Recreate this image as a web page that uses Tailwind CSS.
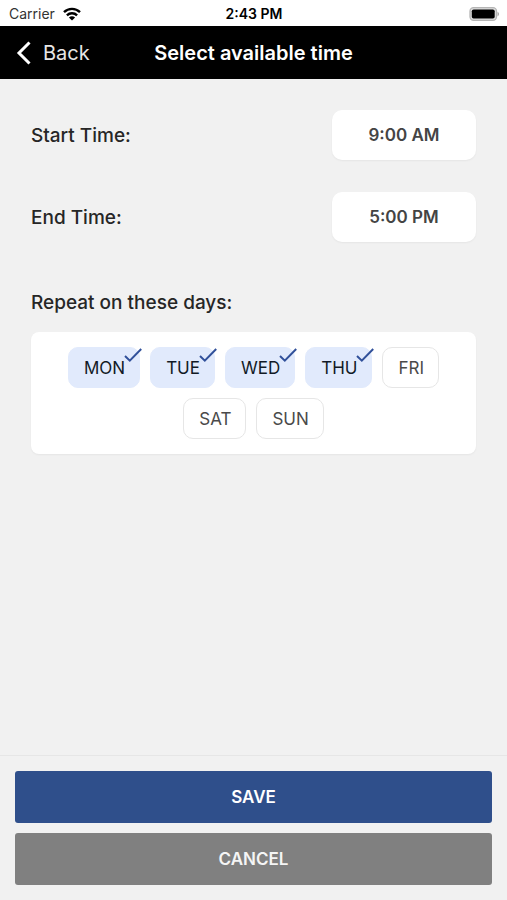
<!DOCTYPE html>
<html lang="en">
<head>
<meta charset="utf-8">
<meta name="viewport" content="width=device-width, initial-scale=1">
<title>Select available time</title>
<script src="https://cdn.jsdelivr.net/npm/@tailwindcss/browser@4"></script>
</head>
<body class="flex min-h-screen flex-col bg-[#f1f1f1] font-[Inter,sans-serif] text-[#262626]">
  <div class="grid h-[26px] grid-cols-[1fr_auto_1fr] items-center bg-white pt-px pr-2 pl-[9px] text-[14px] leading-5 text-black">
    <div class="flex items-center gap-2 text-[#333]">
      <span>Carrier</span>
      <svg class="h-[14px] w-[18px]" viewBox="0 0 18 14" fill="none" stroke="#000" stroke-width="2.4" aria-hidden="true">
        <path d="M1 5.2C5.5 .8 12.500 .8 17 5.200"/>
        <path d="M3.900 8.300c2.900-2.800 7.300-2.800 10.200 0"/>
        <path d="M9 13.600 5.900 10.500c1.700-1.600 4.500-1.600 6.200 0z" fill="#000" stroke="none"/>
      </svg>
    </div>
    <span class="font-semibold">2:43 PM</span>
    <svg class="h-[14px] w-[30px] justify-self-end" viewBox="0 0 30 14" aria-hidden="true">
      <rect x="1" y=".7" width="26.500" height="12.600" rx="3.500" fill="#ddd" stroke="#b5b5b5" stroke-width="1.300"/>
      <rect x="2.800" y="2.400" width="22.900" height="9.200" rx="1.800" fill="#000"/>
      <path d="M28.500 4.700c2 .8 2 3.800 0 4.600z" fill="#aaa"/>
    </svg>
  </div>

  <header class="grid h-[53px] grid-cols-[1fr_auto_1fr] items-center bg-black px-4 text-[20px] leading-6 text-white">
    <button type="button" class="flex items-center gap-[11px] justify-self-start text-[#e6e6e6]">
      <svg class="h-6 w-4" viewBox="0 0 16 24" fill="none" stroke="#fff" stroke-width="3" aria-hidden="true"><path d="M13.500 1.500 3 12 13.500 22.500"/></svg>
      Back
    </button>
    <h1 class="font-semibold">Select available time</h1>
  </header>

  <main class="flex-1 px-[31px] pt-[31px]">
    <div class="flex items-center justify-between">
      <label for="start" class="pt-0.5 text-[19px] leading-6 font-medium">Start Time:</label>
      <button id="start" type="button" class="h-[50px] w-36 rounded-[10px] bg-white pt-0.5 text-[17px] font-semibold text-[#444] shadow-[0_1px_2px_rgba(0,0,0,0.05)]">9:00 AM</button>
    </div>
    <div class="mt-8 flex items-center justify-between">
      <label for="end" class="pt-0.5 text-[19px] leading-6 font-medium">End Time:</label>
      <button id="end" type="button" class="h-[50px] w-36 rounded-[10px] bg-white pt-0.5 text-[17px] font-semibold text-[#444] shadow-[0_1px_2px_rgba(0,0,0,0.05)]">5:00 PM</button>
    </div>

    <fieldset class="mt-12">
      <legend class="pt-px text-[19px] leading-6 font-medium">Repeat on these days:</legend>
      <div class="mt-[17px] flex flex-wrap justify-center gap-[10px] rounded-lg bg-white px-5 py-[15px] text-[17px] leading-6 text-[#4a4a4a] shadow-[0_1px_2px_rgba(0,0,0,0.05)]">
        <label class="group relative flex h-[41px] items-center rounded-[10px] border border-[#e6e6e6] pr-[14px] pl-[15px] has-checked:border-[#e1eafc] has-checked:bg-[#e1eafc] has-checked:text-[#121a26]">
          <input type="checkbox" class="sr-only" checked>MON
          <svg class="absolute -top-px -right-[3px] hidden h-4 w-[18px] group-has-checked:block" viewBox="0 0 18 16" fill="none" stroke="#30509a" stroke-width="2" aria-hidden="true"><path d="M1 9l4.800 4.600L17.200 2"/></svg>
        </label>
        <label class="group relative flex h-[41px] items-center rounded-[10px] border border-[#e6e6e6] pr-[14px] pl-[15px] has-checked:border-[#e1eafc] has-checked:bg-[#e1eafc] has-checked:text-[#121a26]">
          <input type="checkbox" class="sr-only" checked>TUE
          <svg class="absolute -top-px -right-[3px] hidden h-4 w-[18px] group-has-checked:block" viewBox="0 0 18 16" fill="none" stroke="#30509a" stroke-width="2" aria-hidden="true"><path d="M1 9l4.800 4.600L17.200 2"/></svg>
        </label>
        <label class="group relative flex h-[41px] items-center rounded-[10px] border border-[#e6e6e6] pr-[14px] pl-[15px] has-checked:border-[#e1eafc] has-checked:bg-[#e1eafc] has-checked:text-[#121a26]">
          <input type="checkbox" class="sr-only" checked>WED
          <svg class="absolute -top-px -right-[3px] hidden h-4 w-[18px] group-has-checked:block" viewBox="0 0 18 16" fill="none" stroke="#30509a" stroke-width="2" aria-hidden="true"><path d="M1 9l4.800 4.600L17.200 2"/></svg>
        </label>
        <label class="group relative flex h-[41px] items-center rounded-[10px] border border-[#e6e6e6] pr-[14px] pl-[15px] has-checked:border-[#e1eafc] has-checked:bg-[#e1eafc] has-checked:text-[#121a26]">
          <input type="checkbox" class="sr-only" checked>THU
          <svg class="absolute -top-px -right-[3px] hidden h-4 w-[18px] group-has-checked:block" viewBox="0 0 18 16" fill="none" stroke="#30509a" stroke-width="2" aria-hidden="true"><path d="M1 9l4.800 4.600L17.200 2"/></svg>
        </label>
        <label class="group relative flex h-[41px] items-center rounded-[10px] border border-[#e6e6e6] pr-[14px] pl-[15px] has-checked:border-[#e1eafc] has-checked:bg-[#e1eafc] has-checked:text-[#121a26]">
          <input type="checkbox" class="sr-only">FRI
          <svg class="absolute -top-px -right-[3px] hidden h-4 w-[18px] group-has-checked:block" viewBox="0 0 18 16" fill="none" stroke="#30509a" stroke-width="2" aria-hidden="true"><path d="M1 9l4.800 4.600L17.200 2"/></svg>
        </label>
        <label class="group relative flex h-[41px] items-center rounded-[10px] border border-[#e6e6e6] pr-[14px] pl-[15px] has-checked:border-[#e1eafc] has-checked:bg-[#e1eafc] has-checked:text-[#121a26]">
          <input type="checkbox" class="sr-only">SAT
          <svg class="absolute -top-px -right-[3px] hidden h-4 w-[18px] group-has-checked:block" viewBox="0 0 18 16" fill="none" stroke="#30509a" stroke-width="2" aria-hidden="true"><path d="M1 9l4.800 4.600L17.200 2"/></svg>
        </label>
        <label class="group relative flex h-[41px] items-center rounded-[10px] border border-[#e6e6e6] pr-[14px] pl-[15px] has-checked:border-[#e1eafc] has-checked:bg-[#e1eafc] has-checked:text-[#121a26]">
          <input type="checkbox" class="sr-only">SUN
          <svg class="absolute -top-px -right-[3px] hidden h-4 w-[18px] group-has-checked:block" viewBox="0 0 18 16" fill="none" stroke="#30509a" stroke-width="2" aria-hidden="true"><path d="M1 9l4.800 4.600L17.200 2"/></svg>
        </label>
      </div>
    </fieldset>
  </main>

  <footer class="flex flex-col gap-[10px] border-t border-[#e6e6e6] p-[15px]">
    <button type="button" class="h-[52px] rounded-[3px] bg-[#2f4f8b] pt-0.5 text-[17px] font-semibold text-white">SAVE</button>
    <button type="button" class="h-[52px] rounded-[3px] bg-[#808080] pt-0.5 text-[17px] font-semibold text-[#f5f5f5]">CANCEL</button>
  </footer>
</body>
</html>
